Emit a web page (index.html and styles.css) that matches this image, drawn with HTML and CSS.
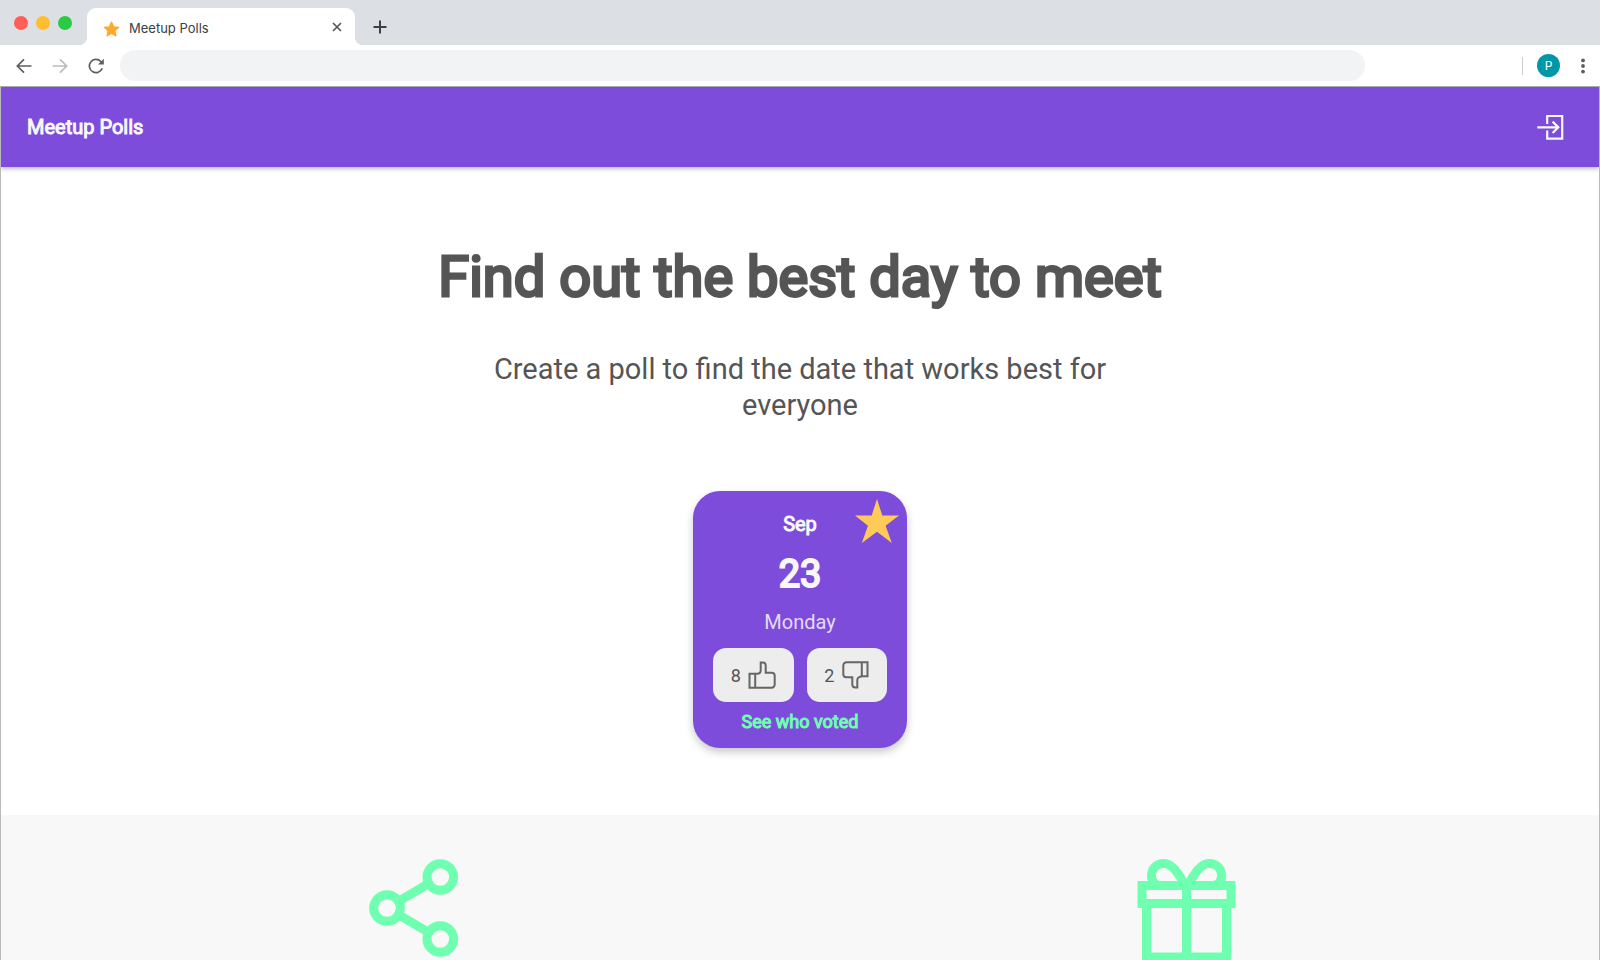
FILE: index.html
```html
<!DOCTYPE html>
<html lang="en">
<head>
<meta charset="utf-8">
<title>Meetup Polls</title>
<link rel="stylesheet" href="styles.css">
</head>
<body>
<div class="browser">
  <div class="tab-strip">
    <div class="lights">
      <button class="light light-close" aria-label="Close window"></button>
      <button class="light light-min" aria-label="Minimize window"></button>
      <button class="light light-max" aria-label="Zoom window"></button>
    </div>
    <div class="tab">
      <svg class="favicon" viewBox="0 0 17 16" aria-hidden="true"><path d="M8.5 1l2.1 4.8 5.2.5-3.9 3.4 1.1 5.2-4.5-2.7L4 14.9l1.100-5.200L1.200 6.300l5.200-.5z" fill="#ffa92e" stroke="#ffa92e" stroke-width="1.200" stroke-linejoin="round"/></svg>
      <span class="tab-title">Meetup Polls</span>
      <button class="icon-btn tab-close" aria-label="Close tab"><svg width="10" height="10" viewBox="0 0 10 10"><path d="M1 1l8 8M9 1L1 9" stroke="#54585c" stroke-width="1.700"/></svg></button>
    </div>
    <button class="icon-btn new-tab" aria-label="New tab"><svg width="14" height="14" viewBox="0 0 14 14"><path d="M7 .5v13M.5 7h13" stroke="#3c4043" stroke-width="2"/></svg></button>
  </div>
  <div class="toolbar">
    <div class="nav">
      <button class="icon-btn" aria-label="Back"><svg width="16" height="16" viewBox="0 0 16 16"><path d="M15.500 8H2M8 1.300L1.300 8 8 14.700" fill="none" stroke="#5a5e62" stroke-width="1.700"/></svg></button>
      <button class="icon-btn" aria-label="Forward"><svg width="16" height="16" viewBox="0 0 16 16"><path d="M.5 8H14M8 1.300L14.700 8 8 14.700" fill="none" stroke="#babcbe" stroke-width="1.700"/></svg></button>
      <button class="icon-btn" aria-label="Reload"><svg width="16" height="16" viewBox="0 0 16 16"><path d="M14.200 10.300A6.600 6.600 0 1 1 12.800 3.500L13.500 4.200" fill="none" stroke="#5a5e62" stroke-width="1.700"/><path d="M15.800.8v5.800H10z" fill="#5a5e62"/></svg></button>
    </div>
    <input class="address" type="text" aria-label="Address">
    <div class="tools">
      <span class="divider"></span>
      <button class="avatar">P</button>
      <button class="icon-btn" aria-label="Menu"><svg width="4" height="16" viewBox="0 0 4 16"><g fill="#5a5e62"><circle cx="2" cy="2.400" r="1.900"/><circle cx="2" cy="8" r="1.900"/><circle cx="2" cy="13.600" r="1.900"/></g></svg></button>
    </div>
  </div>
  <div class="page">
    <header class="app-bar">
      <a class="brand strong" href="#">Meetup Polls</a>
      <button class="icon-btn" aria-label="Log in"><svg width="27" height="27" viewBox="0 0 27 27"><path d="M10.200 10V2h15v22.600h-15v-8M.3 13.300h20M15.600 7.600l5.700 5.700-5.700 5.700" fill="none" stroke="#f8f8f8" stroke-width="2.200"/></svg></button>
    </header>
    <main>
      <section class="hero">
        <h1 class="hero-title">Find out the best day to meet</h1>
        <p class="hero-text">Create a poll to find the date that works best for everyone</p>
        <article class="card">
          <svg class="card-star" viewBox="0 0 44 44" aria-hidden="true"><path d="M22 0l5.300 16.500H44L30.600 26.800 36.800 44 22 32.700 6.800 44l6.200-17.200L0 16.500h16.700z" fill="#ffca58"/></svg>
          <div class="month strong">Sep</div>
          <div class="day">23</div>
          <div class="weekday">Monday</div>
          <div class="votes">
            <button class="vote" aria-label="8 votes for"><span>8</span><svg width="28" height="28" viewBox="0 0 28 28"><g fill="none" stroke="#666" stroke-width="2"><path d="M1.500 12.800H9c2.500 0 3.700-1.400 3.700-3.500V1.500h2c2 0 3 1 3 3v7.300h6c2 0 3 1 3 3V23c0 2.400-1.200 3.700-3.500 3.700H1.500zM7.200 12.800v13.900"/></g></svg></button>
            <button class="vote" aria-label="2 votes against"><span>2</span><svg width="28" height="28" viewBox="0 0 28 28"><g fill="none" stroke="#666" stroke-width="2"><path d="M26.500 15.200H22c-2.500 0-5.700 1.400-5.700 3.500v7.800h-2c-2 0-3-1-3-3v-7.300h-6c-2 0-3-1-3-3V5c0-2.400 1.200-3.700 3.500-3.700h20.700zM20.800 15.200V1.300"/></g></svg></button>
          </div>
          <a class="voters strong" href="#">See who voted</a>
        </article>
      </section>
      <section class="features">
        <div class="feature"><svg width="108" height="108" viewBox="0 0 108 108" role="img" aria-label="Share"><g fill="none" stroke="#6fffb0" stroke-width="9"><circle cx="80.300" cy="23" r="13.300"/><circle cx="27" cy="54" r="13.300"/><circle cx="80.300" cy="85" r="13.300"/><path d="M38.500 47.300l30-17.600M38.500 60.700l30 17.600"/></g></svg></div>
        <div class="feature"><svg width="108" height="108" viewBox="0 0 108 108" role="img" aria-label="Gift"><g fill="none" stroke="#6fffb0" stroke-width="9"><path d="M9 31.500h89v18H9zM13.500 49.500v53.500h80V49.500M53.500 31.500v71.500"/><path d="M53.500 34C45 18 39 9.500 31 9.500c-8 0-12.500 5.500-12.500 12.500 0 6 4 9.500 9.500 9.500M53.500 34C62 18 68 9.500 76 9.500c8 0 12.500 5.500 12.500 12.500 0 6-4 9.500-9.500 9.500"/></g></svg></div>
      </section>
    </main>
  </div>
</div>
</body>
</html>
```
FILE: styles.css
```css
* { box-sizing: border-box; }
body { margin: 0; font-family: Roboto, "Liberation Sans", sans-serif; color: #555; }
button { border: 0; padding: 0; font: inherit; color: inherit; cursor: pointer; }
svg { display: block; }
.browser { display: flex; flex-direction: column; height: 100vh; overflow: hidden; background: #fff; }
.icon-btn { background: none; }
.strong { font-weight: 400; -webkit-text-stroke: 1px currentColor; }
.tab-strip { display: flex; flex: none; height: 45px; background: #dcdfe4; }
.lights { display: flex; gap: 8px; width: 87px; padding: 16px 0 0 14px; }
.light { width: 14px; height: 14px; border-radius: 50%; }
.light-close { background: #ff5f57; }
.light-min { background: #ffbe2e; }
.light-max { background: #2aca44; }
.tab { position: relative; display: flex; align-items: center; width: 268px; height: 37px; margin-top: 8px; padding: 0 13px 0 16px; border-radius: 9px 9px 0 0; background: #fff; }
.tab::before, .tab::after { content: ""; position: absolute; bottom: 0; width: 8px; height: 8px; }
.tab::before { right: 100%; background: radial-gradient(circle at 0 0, #dcdfe4 8px, #fff 8px); }
.tab::after { left: 100%; background: radial-gradient(circle at 100% 0, #dcdfe4 8px, #fff 8px); }
.favicon { width: 17px; height: 16px; margin-top: 5px; }
.tab-title { flex: 1; margin: 3px 0 0 9px; font: 13px/16px Inter, sans-serif; color: #3c4043; }
.new-tab { width: 50px; padding: 8px 0 0 18px; }
.toolbar { display: flex; flex: none; align-items: center; height: 42px; padding: 0 15px 0 16px; border-bottom: 1px solid #aaa; background: #fff; }
.nav { display: flex; gap: 20px; margin-right: 16px; }
.address { flex: 1; min-width: 0; height: 31px; margin-right: 157px; border: 0; border-radius: 16px; padding: 0 16px; background: #f1f3f4; font: 14px Inter, sans-serif; }
.tools { display: flex; align-items: center; }
.divider { width: 1px; height: 18px; background: #ccc; }
.avatar { width: 23px; height: 23px; margin: 0 21px 0 14px; border-radius: 50%; background: #0097a7; color: #fff; font: 12px Inter, sans-serif; }
.page { flex: 1; min-height: 0; overflow: hidden; border: solid #bbb; border-width: 0 1px; }
.app-bar { position: relative; display: flex; align-items: center; justify-content: space-between; height: 80px; padding: 0 35px 0 26px; background: #7d4cdb; box-shadow: 0 2px 4px rgba(0, 0, 0, .25); }
.brand { color: #f8f8f8; font-size: 20px; line-height: 28px; text-decoration: none; }
.hero { display: flex; flex-direction: column; align-items: center; padding: 78px 24px 67px; text-align: center; }
.hero-title { margin: 0; font-size: 56px; line-height: 64px; font-weight: 400; -webkit-text-stroke: 3px currentColor; }
.hero-text { max-width: 640px; margin: 42px 0 68px; font-size: 29px; line-height: 36px; }
.card { position: relative; width: 214px; padding: 19px 20px 14px; border-radius: 27px; background: #7d4cdb; color: #f8f8f8; box-shadow: 0 4px 8px rgba(0, 0, 0, .22); }
.card-star { position: absolute; top: 8px; right: 8px; width: 44px; height: 44px; }
.month { font-size: 20px; line-height: 28px; }
.day { margin: 12px 0; font-size: 38px; line-height: 48px; font-weight: 400; -webkit-text-stroke: 2px currentColor; }
.weekday { font-size: 20px; line-height: 24px; color: #e5dbf8; }
.votes { display: flex; gap: 13px; margin: 14px 0 8px; }
.vote { display: flex; flex: 1; align-items: center; justify-content: center; gap: 7px; height: 54px; border-radius: 13px; background: #ededed; color: #555; font-size: 18px; }
.voters { display: block; font-size: 18px; line-height: 24px; color: #6fffb0; text-decoration: none; }
.features { display: grid; grid-template-columns: 1fr 1fr; padding: 39px 26px; background: #f8f8f8; }
.feature { display: flex; justify-content: center; }
```
